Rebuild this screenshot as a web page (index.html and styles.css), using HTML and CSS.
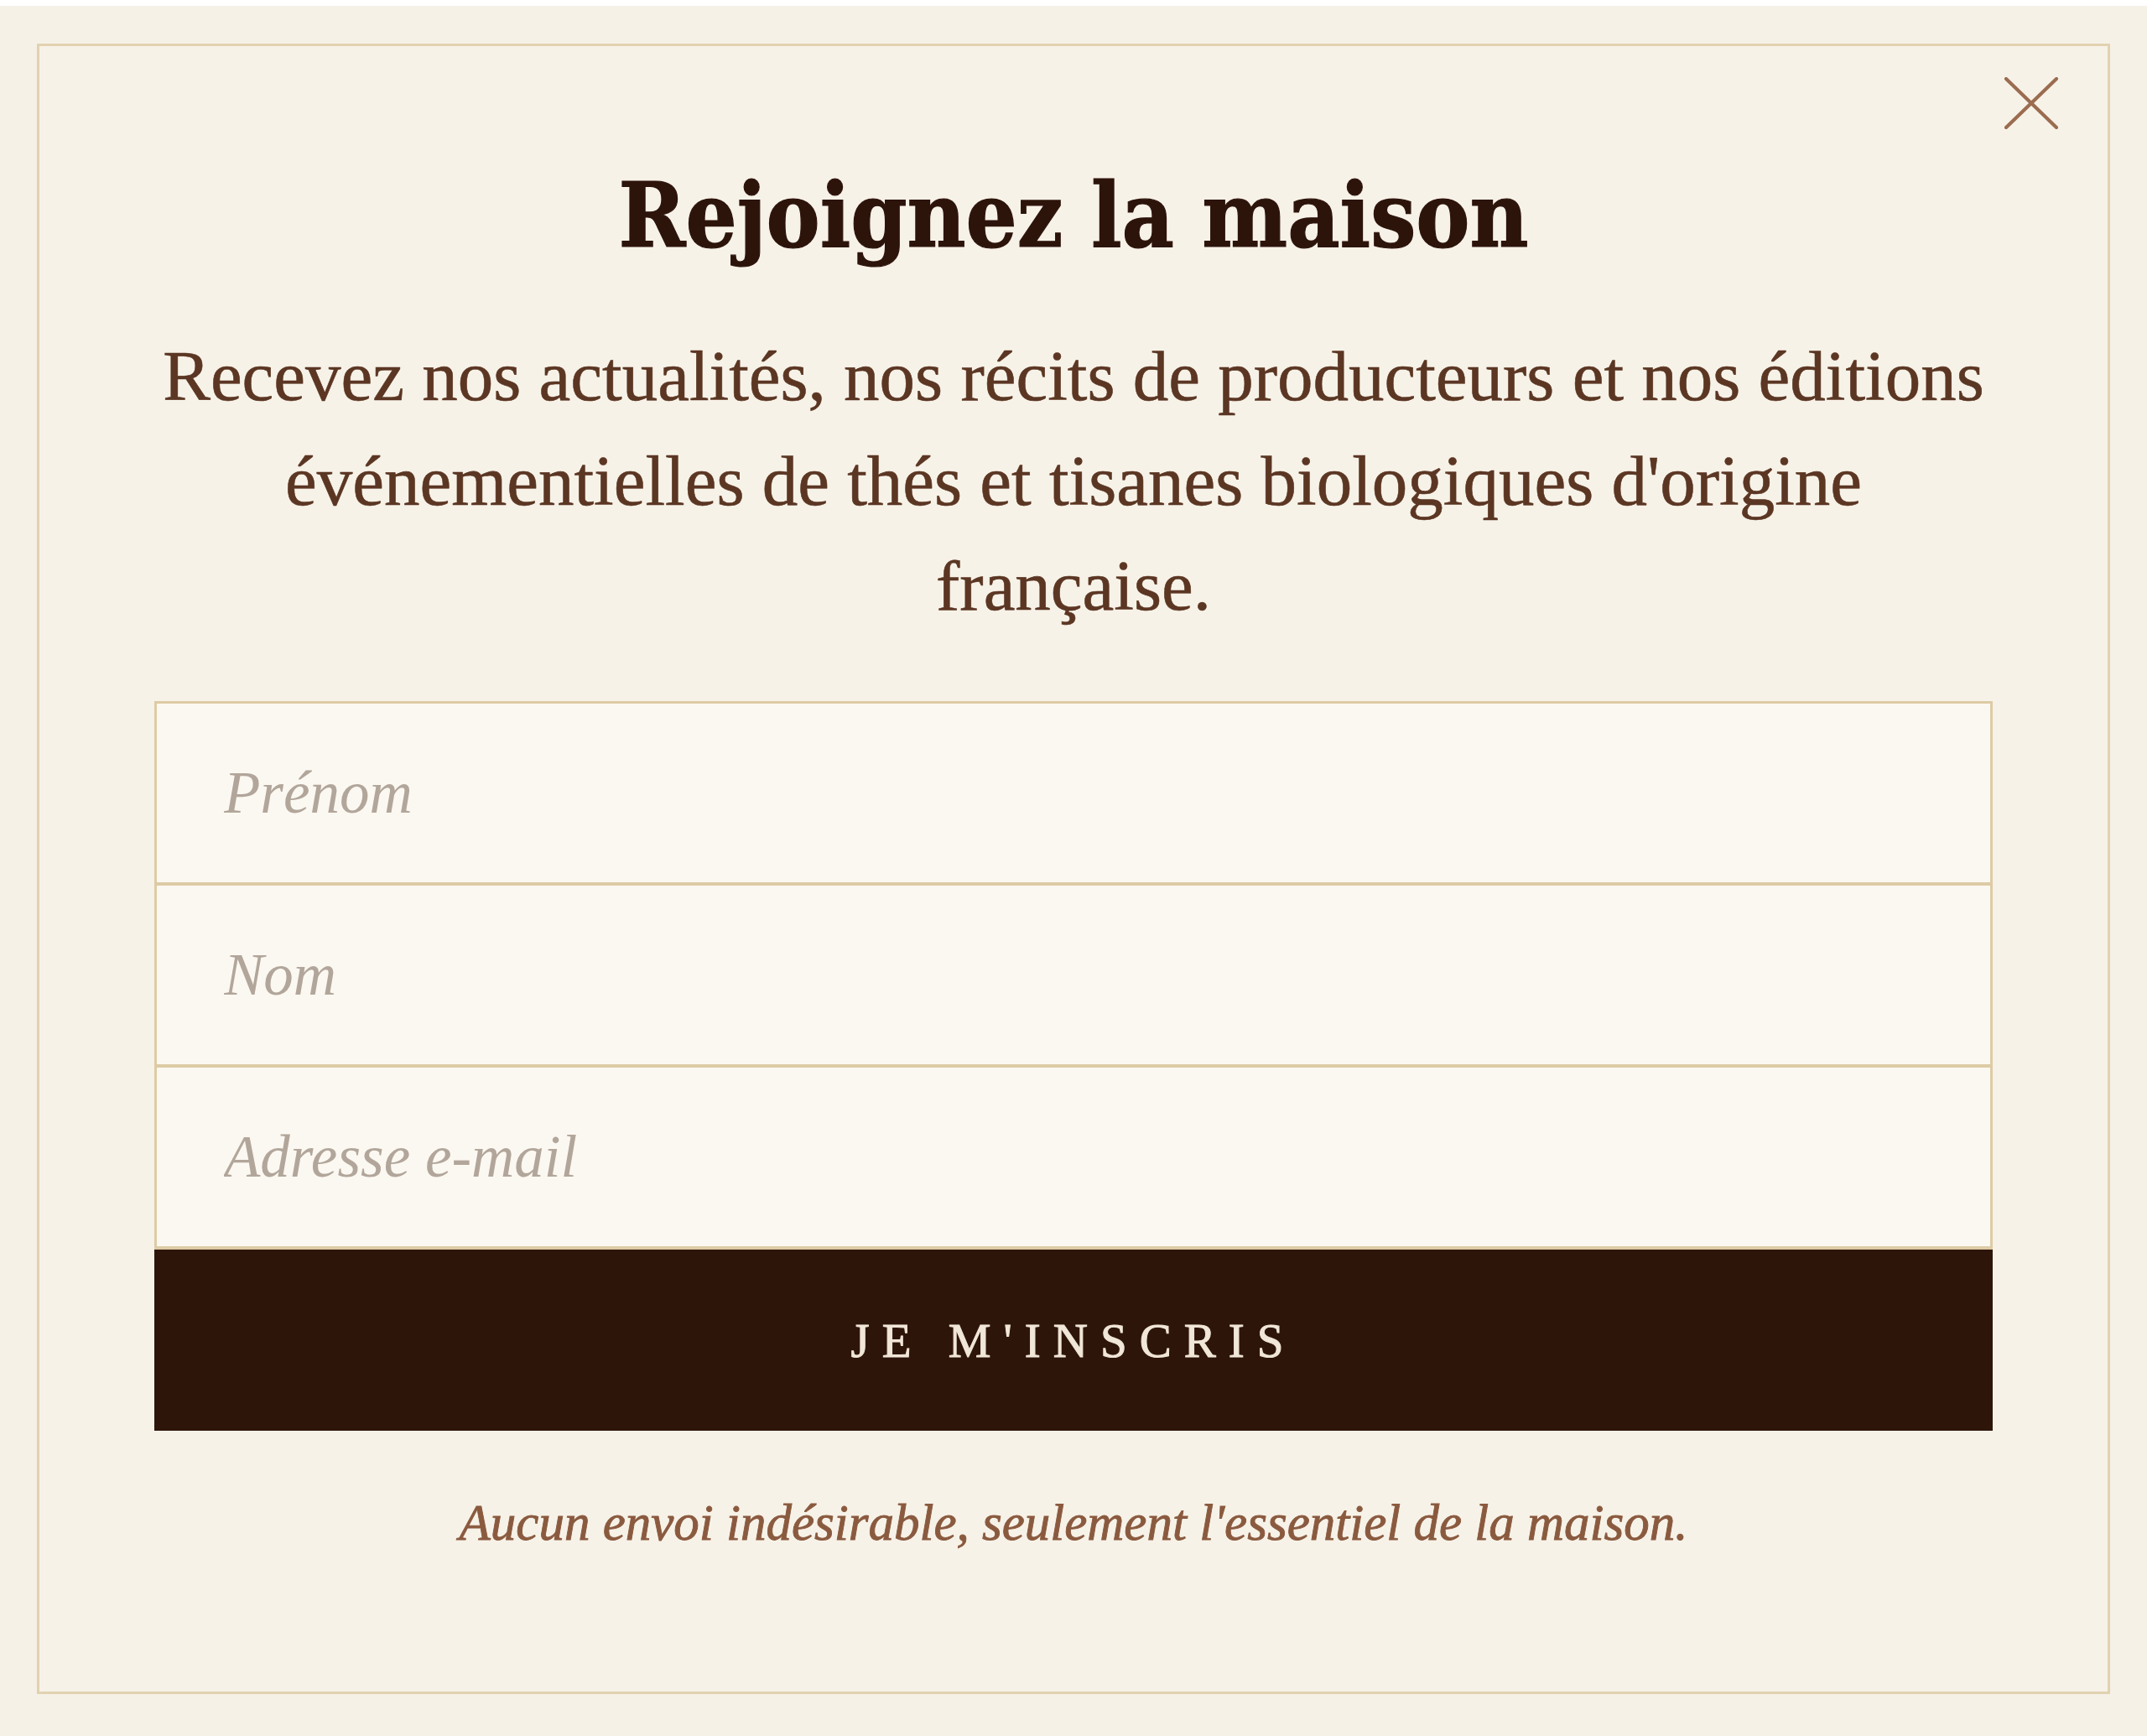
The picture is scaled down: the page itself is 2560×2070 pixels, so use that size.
FILE: index.html
```html
<!DOCTYPE html>
<html lang="fr">
<head>
<meta charset="utf-8">
<title>Rejoignez la maison</title>
<link rel="stylesheet" href="styles.css">
</head>
<body>
<div class="modal">
  <button class="close" aria-label="Fermer">
    <svg viewBox="0 0 64 62" width="64" height="62">
      <line x1="2" y1="2" x2="62" y2="60"/>
      <line x1="62" y1="2" x2="2" y2="60"/>
    </svg>
  </button>
  <h1 class="title">Rejoignez la maison</h1>
  <p class="lead">Recevez nos actualités, nos récits de producteurs et nos éditions<br>événementielles de thés et tisanes biologiques d'origine<br>française.</p>
  <form class="form">
    <div class="fields">
      <input class="field" type="text" placeholder="Prénom">
      <input class="field" type="text" placeholder="Nom">
      <input class="field" type="email" placeholder="Adresse e-mail">
    </div>
    <button class="submit" type="button">JE M'INSCRIS</button>
  </form>
  <p class="note">Aucun envoi indésirable, seulement l'essentiel de la maison.</p>
</div>
</body>
</html>
```

FILE: styles.css
```css
html {
  background: #ffffff;
}

body {
  margin: 7px 0 0;
  padding-top: 45px;
  height: 2063px;
  box-sizing: border-box;
  background: #f6f1e7;
  font-family: "Liberation Serif", "Times New Roman", serif;
}

.modal {
  position: relative;
  box-sizing: border-box;
  margin: 0 44px;
  height: 1968px;
  border: 3px solid #e1d2b0;
  background: #f7f2e8;
  padding-top: 150px;
  text-align: center;
}

.close {
  position: absolute;
  top: 37px;
  right: 59px;
  width: 64px;
  height: 62px;
  padding: 0;
  border: 0;
  background: transparent;
  cursor: pointer;
}

.close svg {
  display: block;
}

.close line {
  stroke: #9b6c50;
  stroke-width: 4.2;
  stroke-linecap: round;
}

.title {
  margin: 0;
  font-family: "DejaVu Serif Condensed", "DejaVu Serif", serif;
  font-stretch: condensed;
  font-weight: 700;
  font-size: 107px;
  line-height: 104px;
  color: #2d140b;
  -webkit-text-stroke: 1.2px #2d140b;
}

.lead {
  margin: 77px 0 0;
  font-size: 85px;
  line-height: 125px;
  color: #5b3623;
  -webkit-text-stroke: 0.6px #5b3623;
}

.form {
  width: 2192px;
  margin: 75px auto 0;
}

.fields {
  border: 3px solid #ddcba5;
  border-bottom: 0;
}

.field {
  display: block;
  width: 100%;
  height: 217px;
  padding: 0 0 0 80px;
  margin: 0;
  box-sizing: border-box;
  border: 0;
  border-bottom: 4px solid #ddcba5;
  background: #fbf8f1;
  font-family: "Liberation Serif", "Times New Roman", serif;
  font-style: italic;
  font-size: 71px;
  color: #5b3623;
  outline: none;
}

.field::placeholder {
  color: #b2a69b;
}

.submit {
  display: block;
  width: 100%;
  height: 216px;
  margin: 0;
  border: 0;
  background: #2e150a;
  color: #f1e7d8;
  font-family: "Liberation Serif", "Times New Roman", serif;
  font-size: 57px;
  letter-spacing: 15px;
  -webkit-text-stroke: 1px #f1e7d8;
  cursor: pointer;
}

.note {
  margin: 70px 0 0;
  font-style: italic;
  font-size: 61px;
  line-height: 80px;
  color: #8a5a3f;
  -webkit-text-stroke: 0.9px #8a5a3f;
}
```
